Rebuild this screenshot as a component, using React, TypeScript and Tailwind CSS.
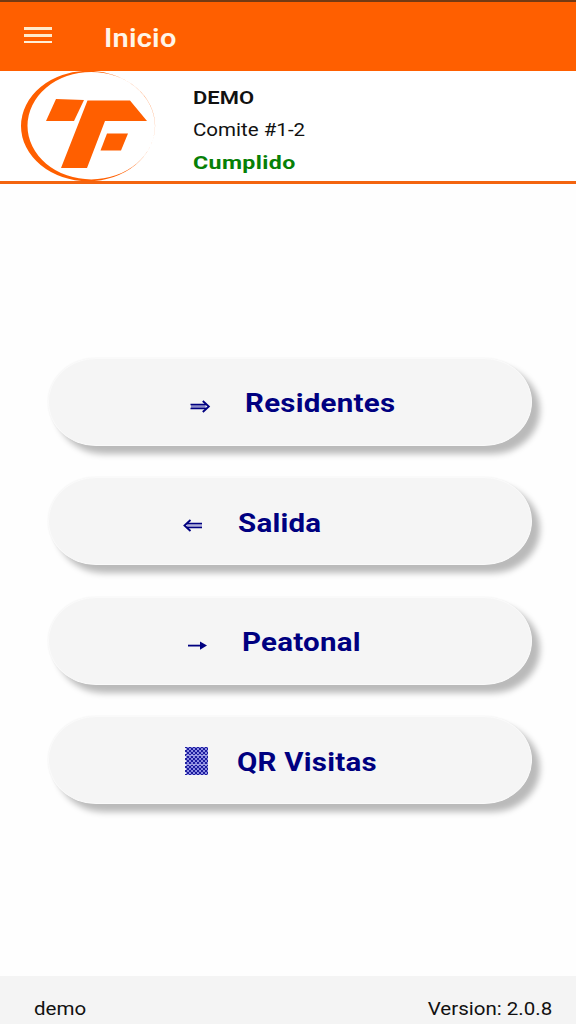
import type { ReactNode } from 'react'

const ArrowRightDouble = () => (
  <svg width="22" height="14" viewBox="0 0 22 14" fill="none" stroke="#000080">
    <path d="M1 6h14.500v4H1z" fill="#8a8ac8" stroke="none" />
    <path d="M0.500 5.500h15.500M0.500 9.500h15.500" strokeWidth="1.500" />
    <path d="M12.800 2L18.800 7.500l-6 5.500" strokeWidth="1.900" />
  </svg>
)

const ArrowLeftDouble = () => (
  <svg width="22" height="14" viewBox="0 0 22 14" fill="none" stroke="#000080">
    <path d="M4 6h15v4H4z" fill="#b0b0da" stroke="none" />
    <path d="M4 5.500h15M4 9.500h15" strokeWidth="1.500" />
    <path d="M7.500 2L1.500 7.500l6 5.500" strokeWidth="1.900" />
  </svg>
)

const ArrowRight = () => (
  <svg width="22" height="14" viewBox="0 0 22 14" fill="#000080">
    <path d="M1 6.700h13v1.800H1z" />
    <path d="M13 3.500L20 7.600L13 11.700z" />
  </svg>
)

const Shade = () => (
  <svg width="24" height="30" viewBox="0 0 24 30">
    <defs>
      <pattern id="shade" width="4" height="4" patternUnits="userSpaceOnUse">
        <circle cx="1" cy="1" r="1.150" fill="#15159a" />
        <circle cx="3" cy="3" r="1.150" fill="#15159a" />
      </pattern>
    </defs>
    <rect x="1" y="1" width="22" height="28" fill="#9494e6" />
    <rect x="0" y="1" width="23" height="28" fill="url(#shade)" />
    <path d="M1 9.500h22M1 18.500h22" stroke="#b4b4ea" strokeWidth="0.800" />
  </svg>
)

const Logo = () => (
  <svg width="140" height="112" viewBox="0 0 140 112" fill="#ff5f00">
    <path
      fillRule="evenodd"
      d="M1 55a67 55.200 0 0 1 134 0a67 55.200 0 0 1-134 0zM7.500 54.700a63.800 53.700 0 0 0 127.600 0a63.800 53.700 0 0 0-127.600 0z"
    />
    <path d="M36 28L64 29L54 50H26z" />
    <path d="M67.500 29.500H110L127 50H85L67 97H41z" />
    <path d="M87 62.500h21L101 79.500H80.500z" />
  </svg>
)

const items: { label: string; icon: ReactNode; pad: string; text: string }[] = [
  { label: 'Residentes', icon: <ArrowRightDouble />, pad: 'pl-[142px]', text: 'pl-[33px]' },
  { label: 'Salida', icon: <ArrowLeftDouble />, pad: 'pl-[135px]', text: 'pl-[33px]' },
  { label: 'Peatonal', icon: <ArrowRight />, pad: 'pl-[139px]', text: 'pl-[33px]' },
  { label: 'QR Visitas', icon: <Shade />, pad: 'pl-[137px]', text: 'pl-[28px]' },
]

const App = () => (
  <div className="flex h-[1024px] w-[576px] flex-col overflow-hidden bg-[#fefefe] font-['Roboto',sans-serif] text-[#111]">
    <header className="flex h-[71px] shrink-0 items-center border-t-2 border-[#743a13] bg-[#ff5f00] pl-6">
      <div className="mb-[3px] flex w-7 flex-col gap-1">
        <span className="h-[3px] bg-[#ffeacb]" />
        <span className="h-[3px] bg-[#ffeacb]" />
        <span className="h-[2px] bg-[#fff0d8]" />
      </div>
      <h1 className="ml-[52px] origin-left scale-x-[1.16] pt-[5px] text-[25px] font-semibold tracking-[0.2px] text-[#fff5e8]">
        Inicio
      </h1>
    </header>

    <section className="flex h-[113px] shrink-0 border-b-3 border-[#f3640f] bg-white pl-5">
      <Logo />
      <div className="flex flex-col items-start pt-[11px] pl-[33px] text-lg leading-8">
        <span className="origin-left scale-x-[1.22] font-semibold">DEMO</span>
        <span className="origin-left scale-x-[1.14]">Comite #1-2</span>
        <span className="origin-left scale-x-[1.22] pt-px text-[19px] font-bold tracking-[0.3px] text-[#078007]">
          Cumplido
        </span>
      </div>
    </section>

    <main className="flex grow flex-col gap-[31.500px] pt-[173.500px] pl-12">
      {items.map((item) => (
        <button
          key={item.label}
          className={`flex h-[88px] w-[484px] items-center rounded-[48px/44px] border border-[#fafafa] bg-[#f5f5f5] text-[#000080] shadow-[8px_8px_6px_#bababa,0_0_2px_#f0f0f0] ${item.pad}`}
        >
          <span className="-ml-px pt-2 has-[pattern]:pt-0.5">{item.icon}</span>
          <span className={item.text}>
            <span className="inline-block origin-left scale-x-[1.18] pt-[5px] text-[25px] font-bold tracking-[0.2px] whitespace-nowrap">
              {item.label}
            </span>
          </span>
        </button>
      ))}
    </main>

    <footer className="flex h-12 shrink-0 justify-between bg-[#f4f4f4] pt-[19px] pr-6 pl-[34px] text-lg">
      <span className="origin-left scale-x-[1.14]">demo</span>
      <span className="origin-right scale-x-[1.14]">Version: 2.0.8</span>
    </footer>
  </div>
)

export default App
